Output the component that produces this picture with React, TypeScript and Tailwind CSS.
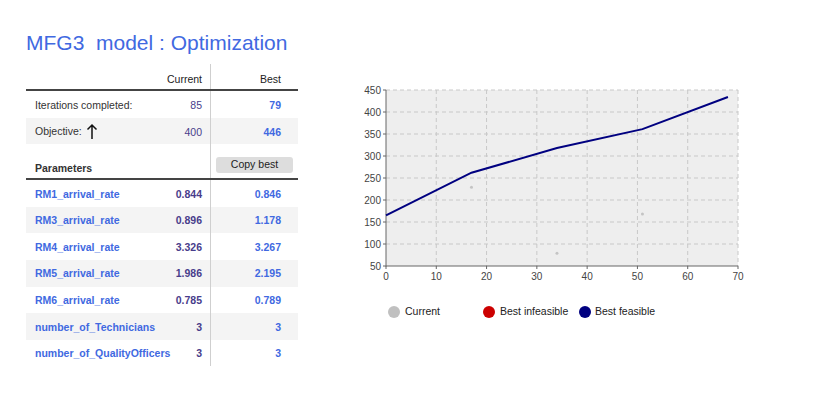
import React from 'react';

const params = [
  { name: 'RM1_arrival_rate', cur: '0.844', best: '0.846' },
  { name: 'RM3_arrival_rate', cur: '0.896', best: '1.178' },
  { name: 'RM4_arrival_rate', cur: '3.326', best: '3.267' },
  { name: 'RM5_arrival_rate', cur: '1.986', best: '2.195' },
  { name: 'RM6_arrival_rate', cur: '0.785', best: '0.789' },
  { name: 'number_of_Technicians', cur: '3', best: '3' },
  { name: 'number_of_QualityOfficers', cur: '3', best: '3' },
];

// chart scale: x 0..70 -> 36..388, y 50..450 -> 186..10
const sx = (v: number) => 36 + (v * 352) / 70;
const sy = (v: number) => 186 - ((v - 50) * 176) / 400;

const bestLine = [
  [0, 165],
  [17, 262],
  [34, 318],
  [51, 361],
  [68, 434],
];

const currentDots = [
  [17, 229],
  [34, 79],
  [51, 168],
];

function Chart() {
  const xs = [0, 10, 20, 30, 40, 50, 60, 70];
  const ys = [50, 100, 150, 200, 250, 300, 350, 400, 450];
  return (
    <svg width="400" height="210" className="block" style={{ fontFamily: '"Liberation Sans", Arial, sans-serif' }}>
      <rect x={36} y={10} width={352} height={176} fill="#eeeeee" />
      {xs.slice(1).map((v) => (
        <line key={'gx' + v} x1={sx(v)} x2={sx(v)} y1={10} y2={186} stroke="#c8c8c8" strokeDasharray="4 3" />
      ))}
      {ys.slice(1).map((v) => (
        <line key={'gy' + v} x1={36} x2={388} y1={sy(v)} y2={sy(v)} stroke="#c8c8c8" strokeDasharray="4 3" />
      ))}
      <line x1={36} x2={36} y1={10} y2={186.5} stroke="#666" />
      <line x1={36} x2={388} y1={186} y2={186} stroke="#666" />
      {ys.map((v) => (
        <g key={'ty' + v}>
          <line x1={33} x2={36} y1={sy(v)} y2={sy(v)} stroke="#666" />
          <text x={31} y={sy(v) + 3.5} fontSize="10" fill="#444" textAnchor="end">
            {v}
          </text>
        </g>
      ))}
      {xs.map((v) => (
        <g key={'tx' + v}>
          <line x1={sx(v)} x2={sx(v)} y1={186} y2={189} stroke="#666" />
          <text x={sx(v)} y={200} fontSize="10" fill="#444" textAnchor="middle">
            {v}
          </text>
        </g>
      ))}
      {currentDots.map(([x, y]) => (
        <circle key={'d' + x} cx={sx(x)} cy={sy(y)} r={1.5} fill="#c4c4c4" />
      ))}
      <polyline
        points={bestLine.map(([x, y]) => `${sx(x)},${sy(y)}`).join(' ')}
        fill="none"
        stroke="#000080"
        strokeWidth="2"
      />
    </svg>
  );
}

function Row({ name, cur, best, gray, bold, link, pad = 'pt-[3px]' }: { name: React.ReactNode; cur: string; best: string; gray?: boolean; bold?: boolean; link?: boolean; pad?: string }) {
  return (
    <div className={`flex h-[26.6px] items-center ${gray ? 'bg-[#f4f4f4]' : ''}`}>
      <div className={`w-[134px] shrink-0 pl-[9px] ${pad} whitespace-nowrap ${link ? 'text-[#4169e1] font-bold' : 'text-[#333]'}`}>{name}</div>
      <div className={`w-[50px] shrink-0 pr-[8px] ${pad} text-right text-[#483d8b] ${bold ? 'font-bold' : ''}`}>{cur}</div>
      <div className={`w-[88px] shrink-0 h-full border-l border-[#cfcfcf] flex items-center justify-end ${pad} pr-[17px] font-bold text-[#4169e1]`}>{best}</div>
    </div>
  );
}

export default function App() {
  return (
    <div className="w-[831px] h-[416px] bg-white pl-[26px] pt-[30px] text-[10.5px]" style={{ fontFamily: '"Liberation Sans", Arial, sans-serif' }}>
      <h1 className="text-[21px] leading-[26px] text-[#4169e1] whitespace-pre">MFG3  model : Optimization</h1>
      <div className="flex mt-[8px]">
        <div className="w-[272px] shrink-0">
          <div className="flex h-[25px] items-end text-[#222]">
            <div className="w-[134px] shrink-0" />
            <div className="w-[50px] shrink-0 pr-[8px] pb-[1px] text-right">Current</div>
            <div className="w-[88px] shrink-0 h-[25px] border-l border-[#cfcfcf] flex items-end justify-end pb-[1px] pr-[17px]">Best</div>
          </div>
          <div className="h-[2px] bg-[#444]" />
          <Row name="Iterations completed:" cur="85" best="79" pad="pt-[4px]" />
          <Row
            name={
              <span className="flex items-center gap-[4px] -mt-[2px]">
                Objective:
                <svg width="12" height="17" viewBox="0 0 12 17" fill="none" stroke="#111" strokeWidth="1.5">
                  <path d="M6 16V2M1.5 6.5L6 2l4.5 4.5" />
                </svg>
              </span>
            }
            cur="400"
            best="446"
            gray
            pad="pt-[4px]"
          />
          <div className="flex h-[34px] items-end">
            <div className="w-[184px] shrink-0 pl-[9px] pb-[1px] font-bold text-[#333]">Parameters</div>
            <div className="w-[88px] shrink-0 h-full border-l border-[#cfcfcf] flex items-end pb-[5px] pl-[5px]">
              <div className="w-[77px] h-[16px] rounded-[3px] bg-[#dddddd] text-[10.5px] text-[#222] flex items-center justify-center">Copy best</div>
            </div>
          </div>
          <div className="h-[2px] bg-[#444]" />
          {params.map((p, i) => (
            <Row key={p.name} name={p.name} cur={p.cur} best={p.best} gray={i % 2 === 1} bold link pad="pt-[2px]" />
          ))}
        </div>
        <div className="ml-[52px] mt-[16px] flex flex-col">
          <Chart />
          <div className="flex items-center mt-[14px] ml-[38px] text-[10.5px] text-[#222]">
            <span className="w-[12px] h-[12px] shrink-0 rounded-full bg-[#c0c0c0]" />
            <span className="ml-[5px] w-[78px]">Current</span>
            <span className="w-[12px] h-[12px] shrink-0 rounded-full bg-[#cc0000]" />
            <span className="ml-[5px] w-[79px]">Best infeasible</span>
            <span className="w-[12px] h-[12px] shrink-0 rounded-full bg-[#000080]" />
            <span className="ml-[4px]">Best feasible</span>
          </div>
        </div>
      </div>
    </div>
  );
}
